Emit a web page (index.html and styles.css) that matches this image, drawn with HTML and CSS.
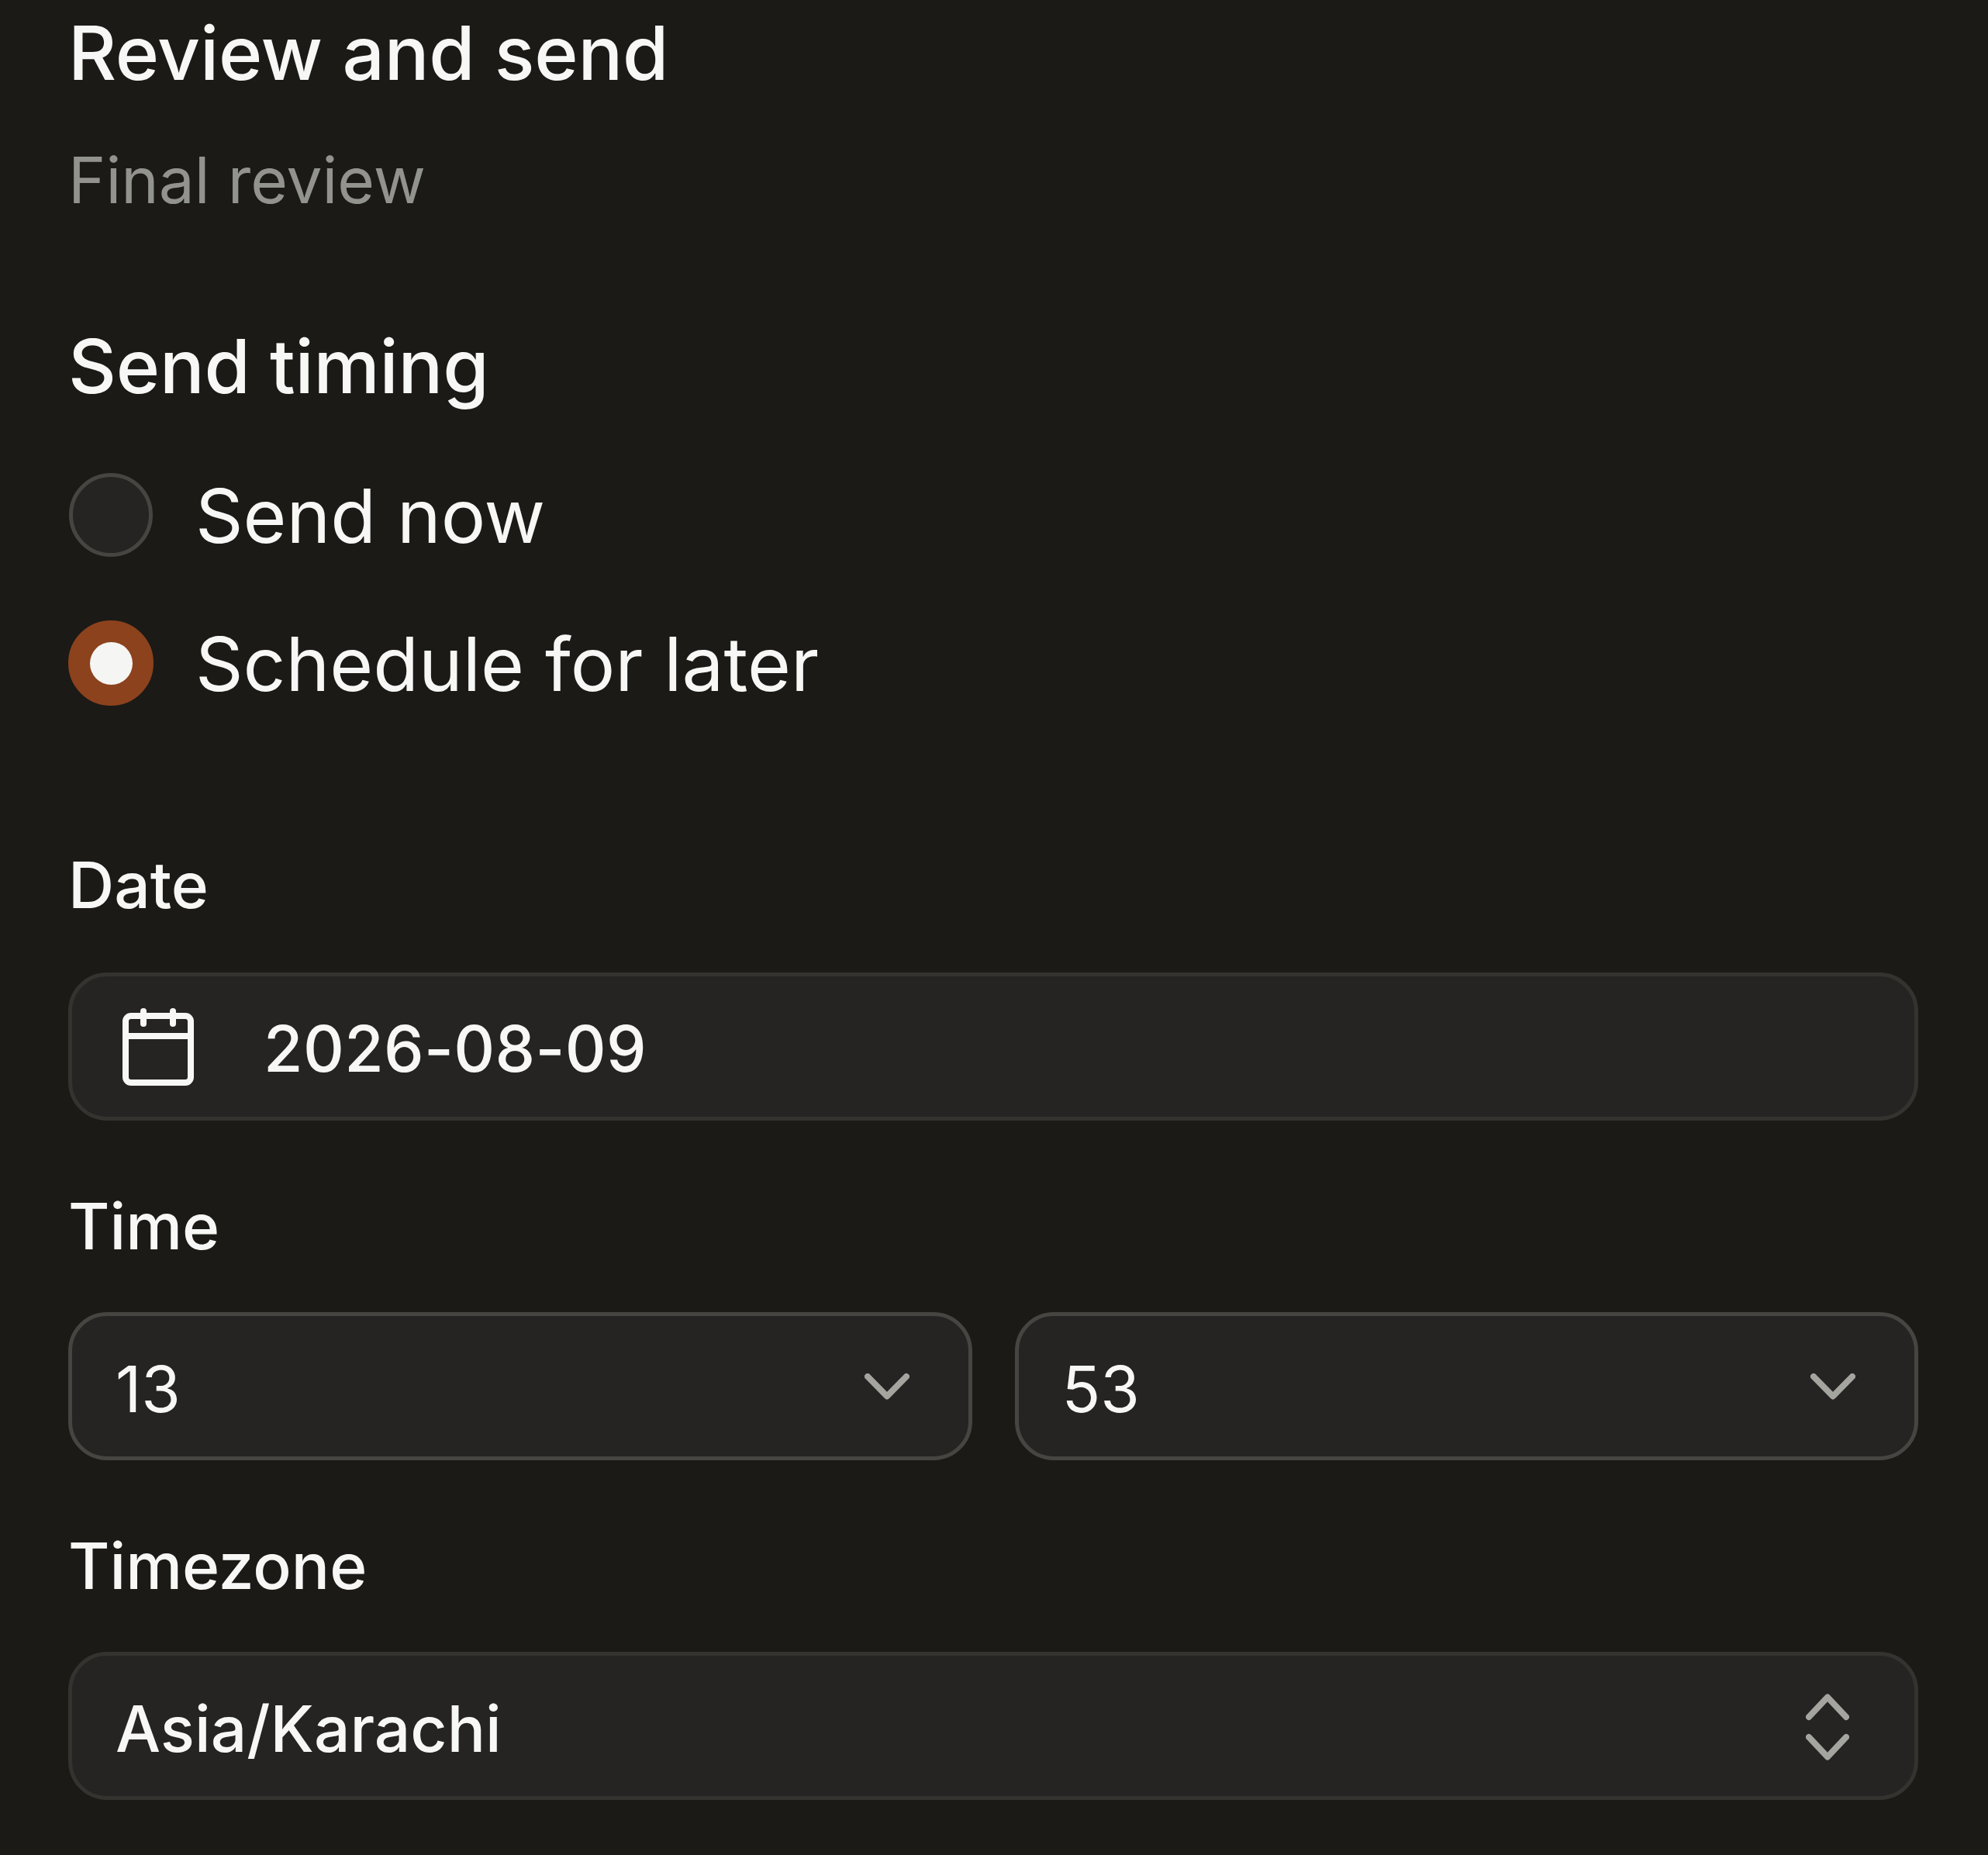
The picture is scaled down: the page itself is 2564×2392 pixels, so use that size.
FILE: index.html
```html
<!DOCTYPE html>
<html lang="en">
<head>
<meta charset="utf-8">
<title>Review and send</title>
<link rel="stylesheet" href="styles.css">
</head>
<body>
<main class="page">
  <h1 class="title">Review and send</h1>
  <p class="subtitle">Final review</p>
  <h2 class="section">Send timing</h2>
  <div class="radios">
    <div class="radio-row">
      <span class="radio"></span>
      <span class="radio-label">Send now</span>
    </div>
    <div class="radio-row">
      <span class="radio radio-on"><span class="radio-dot"></span></span>
      <span class="radio-label">Schedule for later</span>
    </div>
  </div>
  <div class="label label-date">Date</div>
  <div class="field field-date">
    <svg class="icon-cal" viewBox="0 0 92 100" fill="none" stroke="currentColor" stroke-width="8" stroke-linecap="round" stroke-linejoin="round">
      <rect x="4" y="10" width="84" height="86" rx="7"/>
      <path d="M4 36H88"/>
      <path d="M27 4V20"/>
      <path d="M65 4V20"/>
    </svg>
    <span class="value">2026-08-09</span>
  </div>
  <div class="label">Time</div>
  <div class="time-row">
    <div class="field select">
      <span class="value">13</span>
      <svg class="icon-chev" viewBox="0 0 58 34" fill="none" stroke="currentColor" stroke-width="8" stroke-linecap="round" stroke-linejoin="round"><path d="M4 4L29 29.500L54 4"/></svg>
    </div>
    <div class="field select">
      <span class="value">53</span>
      <svg class="icon-chev" viewBox="0 0 58 34" fill="none" stroke="currentColor" stroke-width="8" stroke-linecap="round" stroke-linejoin="round"><path d="M4 4L29 29.500L54 4"/></svg>
    </div>
  </div>
  <div class="label">Timezone</div>
  <div class="field field-tz">
    <span class="value value-strong">Asia/Karachi</span>
    <svg class="icon-updown" viewBox="0 0 56 86" fill="none" stroke="currentColor" stroke-width="8" stroke-linecap="round" stroke-linejoin="round"><path d="M4 30L28 4.500L52 30"/><path d="M4 56L28 81.500L52 56"/></svg>
  </div>
</main>
</body>
</html>
```
FILE: styles.css
```css
* { box-sizing: border-box; }
html, body { margin: 0; padding: 0; background: #1b1a17; }
.page {
  width: 2564px;
  height: 2392px;
  padding: 8px 90px 0 88px;
  font-family: Inter, "Liberation Sans", sans-serif;
  color: #f7f7f5;
  overflow: hidden;
}
.title { margin: 0; font-size: 96px; line-height: 120px; font-weight: 500; letter-spacing: -0.2px; }
.subtitle { margin: 55px 0 0; font-size: 82px; line-height: 100px; font-weight: 400; color: #93938e; }
.section { margin: 129px 0 0; font-size: 96px; line-height: 120px; font-weight: 500; letter-spacing: -0.2px; }
.radios { margin-top: 77px; display: flex; flex-direction: column; gap: 81px; }
.radio-row { display: flex; align-items: center; height: 110px; gap: 54px; }
.radio {
  flex: none;
  width: 108px;
  height: 108px;
  margin-left: 1px;
  margin-right: 1px;
  border-radius: 50%;
  background: #262422;
  border: 5px solid #474542;
  display: flex;
  align-items: center;
  justify-content: center;
}
.radio-on { width: 110px; height: 110px; margin: 0; background: #8c421c; border-color: #8c421c; }
.radio-dot { width: 55px; height: 55px; border-radius: 50%; background: #f5f5f3; }
.radio-label { padding-top: 2px; font-size: 96px; line-height: 120px; }
.label { margin-top: 87px; font-size: 82px; line-height: 100px; font-weight: 500; }
.label-date { margin-top: 182px; }
.field {
  display: flex;
  align-items: center;
  height: 191px;
  margin-top: 60px;
  padding: 0 56px 0 56px;
  background: #262422;
  border: 5px solid #343330;
  border-radius: 50px;
  font-size: 82px;
}
.value { padding-top: 8px; font-weight: 400; }
.field-date { margin-top: 62px; padding-left: 65px; }
.field-date .value { margin-left: 90px; letter-spacing: 0.35px; font-weight: 450; padding-top: 6px; }
.icon-cal { width: 92px; height: 100px; color: #f7f7f5; flex: none; }
.time-row { display: grid; grid-template-columns: 1fr 1fr; gap: 55px; margin-top: 60px; }
.time-row .field { margin-top: 0; border-color: #474542; }
.select { justify-content: space-between; }
.icon-chev { width: 58px; height: 34px; color: #a5a5a0; flex: none; margin-top: 0; margin-right: 20px; }
.field-tz { justify-content: space-between; }
.value-strong { font-weight: 500; }
.icon-updown { width: 56px; height: 86px; color: #a5a5a0; flex: none; margin-top: 3px; margin-right: 28px; }
```
